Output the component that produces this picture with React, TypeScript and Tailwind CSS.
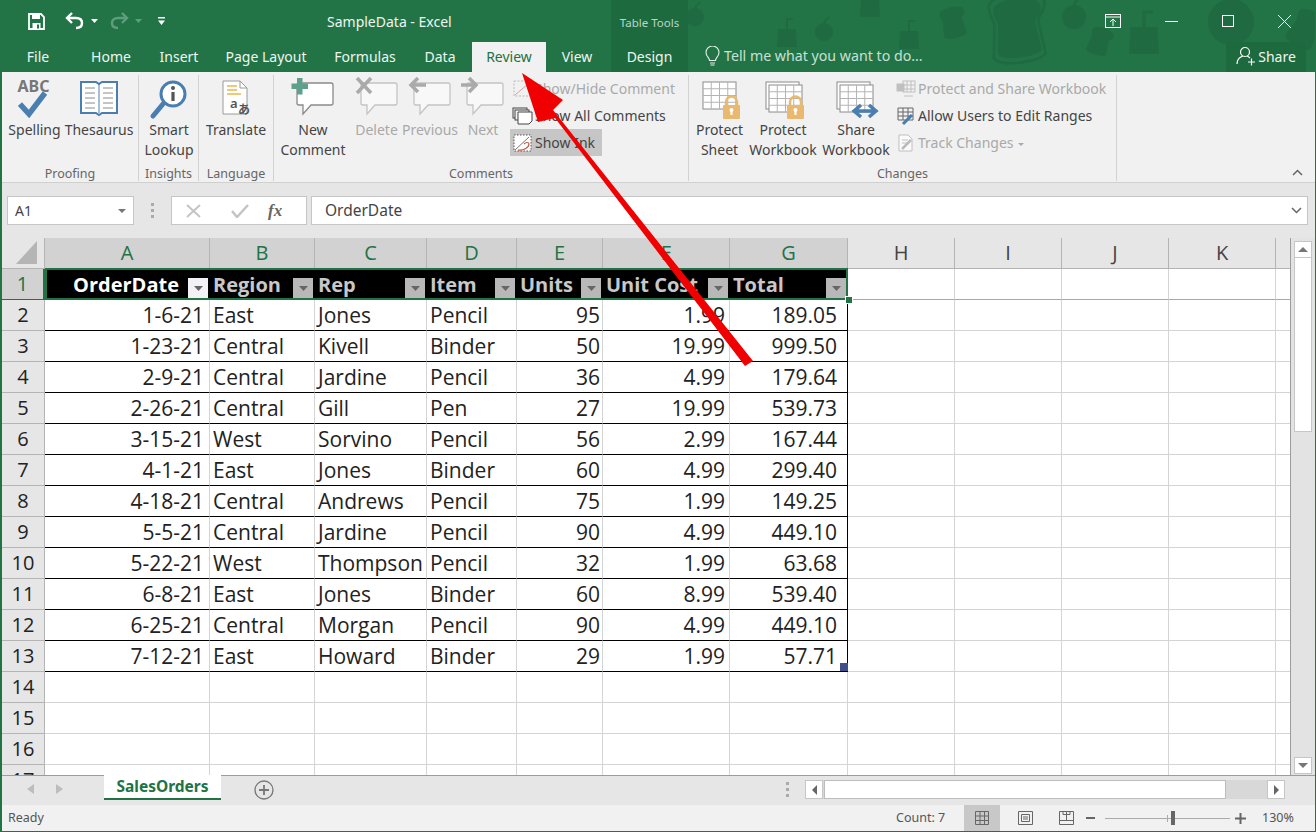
import { Fragment } from "react";

const rows = [
  ["1-6-21", "East", "Jones", "Pencil", "95", "1.99", "189.05"],
  ["1-23-21", "Central", "Kivell", "Binder", "50", "19.99", "999.50"],
  ["2-9-21", "Central", "Jardine", "Pencil", "36", "4.99", "179.64"],
  ["2-26-21", "Central", "Gill", "Pen", "27", "19.99", "539.73"],
  ["3-15-21", "West", "Sorvino", "Pencil", "56", "2.99", "167.44"],
  ["4-1-21", "East", "Jones", "Binder", "60", "4.99", "299.40"],
  ["4-18-21", "Central", "Andrews", "Pencil", "75", "1.99", "149.25"],
  ["5-5-21", "Central", "Jardine", "Pencil", "90", "4.99", "449.10"],
  ["5-22-21", "West", "Thompson", "Pencil", "32", "1.99", "63.68"],
  ["6-8-21", "East", "Jones", "Binder", "60", "8.99", "539.40"],
  ["6-25-21", "Central", "Morgan", "Pencil", "90", "4.99", "449.10"],
  ["7-12-21", "East", "Howard", "Binder", "29", "1.99", "57.71"],
];

const headers = ["OrderDate", "Region", "Rep", "Item", "Units", "Unit Cost", "Total"];
const gridCols = "grid grid-cols-[43px_165px_105px_112px_90px_86px_127px_118px_107px_107px_107px_107px_15px]";

function Bubble({ dim }: { dim?: boolean }) {
  return (
    <path
      d="M9 11H41a2 2 0 0 1 2 2V31a2 2 0 0 1-2 2H21L13 42V33H9a2 2 0 0 1-2-2V13a2 2 0 0 1 2-2Z"
      fill="#fff"
      fillOpacity={dim ? 0.5 : 1}
      stroke={dim ? "#c4c4c4" : "#8a8a8a"}
      strokeWidth="1.3"
    />
  );
}

function CommentIcon({ kind }: { kind: "new" | "delete" | "prev" | "next" }) {
  return (
    <svg width="46" height="44" viewBox="0 0 46 44" className="-mt-[7px]">
      <Bubble dim={kind !== "new"} />
      {kind === "new" && <path d="M7 6h5.500v5.500H18V17h-5.500v5.500H7V17H1.500V11.500H7Z" fill="#5f9f8d" />}
      {kind === "delete" && <path d="M3 6l14 15M17 6L3 21" stroke="#aaa" strokeWidth="3.500" fill="none" />}
      {kind === "prev" && <path d="M19 13H5M11 6l-7 7 7 7" stroke="#aaa" strokeWidth="3.500" fill="none" />}
      {kind === "next" && <path d="M1 13h14M9 6l7 7-7 7" stroke="#aaa" strokeWidth="3.500" fill="none" />}
    </svg>
  );
}

function SheetGrid({ x, y, w, h, double }: { x: number; y: number; w: number; h: number; double?: boolean }) {
  const cols = [1, 2, 3];
  const lines = [1, 2, 3];
  return (
    <g stroke="#8c8c8c" strokeWidth="1" fill="none">
      {double && <rect x={x - 3} y={y - 3} width={w} height={h} fill="#fff" />}
      <rect x={x} y={y} width={w} height={h} fill="#fff" />
      {cols.map((c) => (
        <line key={c} x1={x + (w * c) / 4} y1={y} x2={x + (w * c) / 4} y2={y + h} stroke="#b4b4b4" />
      ))}
      {lines.map((l) => (
        <line key={l} x1={x} y1={y + (h * l) / 4} x2={x + w} y2={y + (h * l) / 4} stroke="#b4b4b4" />
      ))}
    </g>
  );
}

function Padlock({ x, y }: { x: number; y: number }) {
  return (
    <g>
      <path d={`M${x + 3} ${y + 10}V${y + 6}a5.500 5.500 0 0 1 11 0V${y + 10}`} fill="none" stroke="#e8b96f" strokeWidth="2.500" />
      <rect x={x} y={y + 9} width="17" height="14" rx="1" fill="#e8b96f" />
      <rect x={x + 7.500} y={y + 13} width="2" height="6" fill="#fff" />
      <circle cx={x + 8.500} cy={y + 14} r="2" fill="#fff" />
    </g>
  );
}

function BigButton({ w, lines, dim, children }: { w: string; lines: string[]; dim?: boolean; children: React.ReactNode }) {
  return (
    <div className={`${w} flex flex-col items-center shrink-0`}>
      <div className="h-[41px] shrink-0 flex items-start justify-center">{children}</div>
      {lines.map((l) => (
        <div key={l} className={`h-[20px] shrink-0 leading-[20px] whitespace-nowrap ${dim ? "text-[#a9a9a9]" : "text-[#444]"}`}>
          {l}
        </div>
      ))}
    </div>
  );
}

function Group({ label, w, children }: { label: string; w: string; children: React.ReactNode }) {
  return (
    <div className={`${w} h-[106px] mt-[3px] shrink-0 flex flex-col border-r border-[#d2d2d2]`}>
      <div className="flex h-[90px] pt-[4px]">{children}</div>
      <div className="h-[16px] leading-[18px] text-center text-[12.500px] text-[#666]">{label}</div>
    </div>
  );
}

function SmallRow({ icon, label, dim, active, w }: { icon: React.ReactNode; label: React.ReactNode; dim?: boolean; active?: boolean; w?: string }) {
  return (
    <div className={`h-[27px] flex items-center ${w ?? ""} ${active ? "bg-[#c6c6c6]" : ""} ${dim ? "text-[#a9a9a9]" : "text-[#444]"}`}>
      <div className="w-[25px] h-[22px] shrink-0 flex justify-center items-center">{icon}</div>
      <span className="whitespace-nowrap">{label}</span>
    </div>
  );
}

function FilterButton({ active }: { active?: boolean }) {
  return (
    <div className={`w-[20px] h-[20px] shrink-0 flex items-center justify-center mb-[1px] ${active ? "bg-[#f1f1f6]" : "bg-[#b8b8b8]"}`}>
      <svg width="9" height="5" viewBox="0 0 9 5">
        <path d="M0 0h9L4.500 5Z" fill="#666" />
      </svg>
    </div>
  );
}

function Doodles() {
  const bread = "M-14-12c0-8 28-8 28 0 0 5-4 6-4 9l2 16c0 4-24 6-26 0l2-16c0-3-2-4-2-9Z";
  const apple = (x: number, y: number, s: number) => (
    <g transform={`translate(${x} ${y}) scale(${s})`}>
      <circle r="10" />
      <path d="M0-9c1-4 3-6 6-7" stroke="#1f6a41" strokeWidth="2" fill="none" />
    </g>
  );
  const cup = (x: number, y: number, s: number) => (
    <g transform={`translate(${x} ${y}) scale(${s})`}>
      <path d="M-9-6H9L10 12H-10Z" />
      <path d="M0-6V-16H6" stroke="#1f6a41" strokeWidth="2" fill="none" />
    </g>
  );
  return (
    <svg className="absolute left-0 top-0 pointer-events-none" width="1316" height="72" viewBox="0 0 1316 72" fill="#1f6a41">
      {apple(693, 17, 0.9)}
      {apple(822, 32, 0.9)}
      {apple(1072, 17, 1.2)}
      {apple(1229, 22, 2.3)}
      {cup(785, 35, 1)}
      {cup(907, 37, 1)}
      {cup(868, 5, 1)}
      {cup(1142, 36, 1.500)}
      <path transform="translate(952 23) rotate(-12) scale(0.9)" d={bread} />
      <path transform="translate(1017 29) rotate(-6) scale(2)" d={bread} fill="none" stroke="#1f6a41" strokeWidth="1.300" />
      <path transform="translate(1017 29) rotate(-6) scale(1.700)" d={bread} />
      <path transform="translate(1098 42) rotate(18) scale(0.800)" d={bread} />
      <path transform="translate(1304 30) rotate(30) scale(1.100)" d={bread} />
    </svg>
  );
}

function TitleBar() {
  return (
    <div className="h-[42px] flex text-[#f1f7f3] relative">
      <div className="w-[325px] flex items-center">
        <svg className="ml-[26px]" width="17" height="17" viewBox="0 0 17 17" fill="none">
          <path d="M1 1h12l3 3v12H1Z" stroke="#fff" strokeWidth="1.800" />
          <rect x="4" y="1" width="8" height="5" fill="#fff" />
          <rect x="4.500" y="10" width="8" height="6" fill="#fff" />
          <rect x="9" y="11.500" width="2" height="4" fill="#227447" />
        </svg>
        <svg className="ml-[20px]" width="20" height="18" viewBox="0 0 20 18" fill="none">
          <path d="M7 1L2 6l5 5M2 6h9c4 0 6 2 6 5s-2 5-6 5" stroke="#fff" strokeWidth="2.400" />
        </svg>
        <svg className="ml-[6px]" width="7" height="4" viewBox="0 0 7 4"><path d="M0 0h7L3.500 4Z" fill="#fff" /></svg>
        <svg className="ml-[11px]" width="20" height="18" viewBox="0 0 20 18" fill="none">
          <path d="M13 1l5 5-5 5M18 6H9c-4 0-6 2-6 5s2 5 6 5" stroke="#5f9d7c" strokeWidth="2.400" />
        </svg>
        <svg className="ml-[6px]" width="7" height="4" viewBox="0 0 7 4"><path d="M0 0h7L3.500 4Z" fill="#5f9d7c" /></svg>
        <svg className="ml-[16px]" width="7" height="8" viewBox="0 0 7 8"><path d="M0 0h7v1.500H0ZM0 3.500h7L3.500 8Z" fill="#fff" /></svg>
      </div>
      <div className="w-[284px] flex items-center text-[14px] text-[#eef6f1]">SampleData - Excel</div>
      <div className="w-[77px] pt-[3px] bg-[#1e6a3f] flex items-center justify-center text-[11.500px] text-[#b8d6c5]">Table Tools</div>
      <div className="flex-1 flex items-center">
        <svg className="ml-[417px]" width="16" height="14" viewBox="0 0 16 14" fill="none" stroke="#fff">
          <rect x="0.500" y="0.500" width="15" height="13" />
          <path d="M0 3h16" />
          <path d="M8 12V5M5 8l3-3 3 3" />
        </svg>
        <div className="ml-[44px] w-[13px] h-px bg-white" />
        <div className="ml-[44px] w-[12px] h-[12px] border border-white" />
        <svg className="ml-[44px]" width="13" height="13" viewBox="0 0 13 13" stroke="#fff" fill="none">
          <path d="M0 0l13 13M13 0L0 13" />
        </svg>
      </div>
    </div>
  );
}

function TabsRow() {
  const tabs: [string, string][] = [
    ["File", "w-[72px]"],
    ["Home", "w-[74px]"],
    ["Insert", "w-[62px]"],
    ["Page Layout", "w-[112px]"],
    ["Formulas", "w-[86px]"],
    ["Data", "w-[64px]"],
  ];
  return (
    <div className="h-[30px] flex text-[14px] text-[#eef6f1] relative">
      {tabs.map(([t, w]) => (
        <div key={t} className={`${w} pb-[2px] flex items-center justify-center`}>
          {t}
        </div>
      ))}
      <div className="w-[74px] pb-[2px] flex items-center justify-center bg-[#f1f1f1] text-[#217346]">Review</div>
      <div className="w-[62px] pb-[2px] flex items-center justify-center">View</div>
      <div className="w-[3px]" />
      <div className="w-[77px] pb-[2px] flex items-center justify-center bg-[#1e6a3f]">Design</div>
      <div className="flex-1 pb-[2px] flex items-center pl-[16px] text-[#c8e0d2]">
        <svg width="17" height="20" viewBox="0 0 17 20" fill="none" stroke="#e4f0e9" strokeWidth="1.100">
          <path d="M5.500 14.500c0-3-3.500-4-3.500-8a6.500 6.500 0 0 1 13 0c0 4-3.500 5-3.500 8Z" />
          <path d="M6 17h5M6.500 19h4" />
        </svg>
        <span className="ml-[3px] whitespace-nowrap text-[14.200px]">Tell me what you want to do...</span>
      </div>
      <div className="w-[80px] mr-[9px] pb-[2px] bg-[#1e6a3f] flex items-center justify-center gap-[2px] text-[#f1f7f3]">
        <svg width="20" height="20" viewBox="0 0 20 20" fill="none" stroke="#fff" strokeWidth="1.200">
          <circle cx="9" cy="6" r="4.500" />
          <path d="M1 18c0-5 3-7 6-8M11 10c1 .3 2 1 3 2M12 16h7M15.500 12.500v7" />
        </svg>
        Share
      </div>
    </div>
  );
}

function Ribbon() {
  return (
    <div className="h-[111px] bg-[#f1f1f1] border-b border-[#d0d0d0] flex text-[14px] relative">
      <Group label="Proofing" w="w-[137px]">
        <BigButton w="w-[63px] ml-px" lines={["Spelling"]}>
          <div className="relative w-[40px] h-[41px]">
            <span className="absolute left-[3px] -top-[5px] text-[16px] font-bold text-[#777]">ABC</span>
            <svg className="absolute left-[3px] top-[12px]" width="30" height="28" viewBox="0 0 30 28" fill="none">
              <path d="M2 13l9 10L27 2" stroke="#4a7eb0" strokeWidth="5.500" />
            </svg>
          </div>
        </BigButton>
        <BigButton w="w-[66px]" lines={["Thesaurus"]}>
          <svg width="40" height="38" viewBox="0 0 40 38" fill="none">
            <path d="M2 3h15l3 2 3-2h15v31H23l-3 2-3-2H2Z" stroke="#4a7eb0" strokeWidth="2" fill="#fff" />
            <path d="M20 5v29" stroke="#4a7eb0" />
            <path d="M6 9h10M24 9h10M6 14h10M24 14h10M6 19h10M24 19h10M6 24h10M24 24h10M6 29h10M24 29h10" stroke="#8a8a8a" />
          </svg>
        </BigButton>
      </Group>
      <Group label="Insights" w="w-[60px]">
        <BigButton w="w-[60px]" lines={["Smart", "Lookup"]}>
          <svg width="40" height="42" viewBox="0 0 40 42" fill="none">
            <circle cx="24" cy="15" r="12" stroke="#4a7eb0" strokeWidth="3" fill="#fff" />
            <path d="M14 25L4 37" stroke="#4a7eb0" strokeWidth="5" strokeLinecap="round" />
            <circle cx="24" cy="9" r="2" fill="#555" />
            <path d="M24 13v9" stroke="#555" strokeWidth="3.200" />
          </svg>
        </BigButton>
      </Group>
      <Group label="Language" w="w-[75px]">
        <BigButton w="w-[74px]" lines={["Translate"]}>
          <div className="relative w-[38px] h-[44px] -mt-[5px]">
            <svg width="38" height="44" viewBox="0 0 38 44" fill="none">
              <path d="M6 7h17l7 7v26H6Z" fill="#fff" stroke="#9a9a9a" />
              <path d="M23 7v7h7" stroke="#9a9a9a" />
              <path d="M10 12h10M10 16h10M10 20h14" stroke="#e8b84f" strokeWidth="1.300" />
            </svg>
            <span className="absolute left-[13px] top-[21px] text-[13px] leading-[16px] font-semibold text-[#555]">a</span>
            <span className="absolute left-[21px] top-[28px] text-[12px] leading-[14px] font-semibold text-[#555] font-['Noto_Sans_CJK_JP',sans-serif]">あ</span>
          </div>
        </BigButton>
      </Group>
      <Group label="Comments" w="w-[415px]">
        <BigButton w="w-[74px] ml-[2px]" lines={["New", "Comment"]}><CommentIcon kind="new" /></BigButton>
        <BigButton w="w-[53px]" dim lines={["Delete"]}><CommentIcon kind="delete" /></BigButton>
        <BigButton w="w-[54px]" dim lines={["Previous"]}><CommentIcon kind="prev" /></BigButton>
        <BigButton w="w-[52px]" dim lines={["Next"]}><CommentIcon kind="next" /></BigButton>
        <div className="flex flex-col ml-[1px] -mt-[4px]">
          <SmallRow
            dim
            label="Show/Hide Comment"
            icon={
              <svg width="20" height="20" viewBox="0 0 20 20" fill="none">
                <rect x="1" y="2" width="17" height="15" stroke="#bbb" strokeDasharray="2 1.500" />
                <path d="M2 16L15 5" stroke="#c8a8a0" />
              </svg>
            }
          />
          <SmallRow
            label="Show All Comments"
            icon={
              <svg width="22" height="20" viewBox="0 0 22 20" fill="none" stroke="#444">
                <rect x="1" y="2" width="14" height="10" />
                <rect x="3" y="4" width="14" height="10" fill="#f1f1f1" />
                <path d="M6 6h14v9l-3 3H6Z" fill="#fff" />
              </svg>
            }
          />
          <SmallRow
            active
            w="w-[92px]"
            label="Show Ink"
            icon={
              <svg width="20" height="20" viewBox="0 0 20 20" fill="none">
                <rect x="1" y="2" width="17" height="16" fill="#fff" stroke="#555" strokeDasharray="1.500 1.500" />
                <path d="M2 17L16 4" stroke="#777" />
                <path d="M5 17c6 1 11-3 11-6 0-2-3-2-5 0" stroke="#c8553d" strokeWidth="1.200" />
              </svg>
            }
          />
        </div>
      </Group>
      <Group label="Changes" w="w-[428px]">
        <BigButton w="w-[59px] ml-[1px]" lines={["Protect", "Sheet"]}>
          <svg width="50" height="46" viewBox="0 0 50 46" fill="none">
            <SheetGrid x={8} y={3} w={33} h={27} />
            <Padlock x={28} y={17} />
          </svg>
        </BigButton>
        <BigButton w="w-[68px]" lines={["Protect", "Workbook"]}>
          <svg width="50" height="46" viewBox="0 0 50 46" fill="none">
            <SheetGrid x={11} y={6} w={33} h={27} double />
            <Padlock x={29} y={17} />
          </svg>
        </BigButton>
        <BigButton w="w-[74px] ml-[2px]" lines={["Share", "Workbook"]}>
          <svg width="50" height="46" viewBox="0 0 50 46" fill="none">
            <SheetGrid x={9} y={6} w={33} h={27} double />
            <path d="M24 32h20M30 26l-7 6 7 6M38 26l7 6-7 6" stroke="#4a7eb0" strokeWidth="3.500" />
          </svg>
        </BigButton>
        <div className="flex flex-col -mt-[4px]">
          <SmallRow
            dim
            label="Protect and Share Workbook"
            icon={
              <svg width="22" height="20" viewBox="0 0 22 20" fill="none" stroke="#c0c0c0">
                <rect x="8" y="2" width="12" height="11" />
                <path d="M8 6h12M8 10h12M12 2v11M16 2v11" />
                <rect x="2" y="5" width="7" height="7" fill="#c0c0c0" />
                <path d="M9 17h9" />
              </svg>
            }
          />
          <SmallRow
            label="Allow Users to Edit Ranges"
            icon={
              <svg width="22" height="20" viewBox="0 0 22 20" fill="none">
                <path d="M3 2h15v12H3ZM3 6h15M3 10h15M8 2v12M13 2v12" stroke="#666" />
                <path d="M8 18l9-9" stroke="#4a7eb0" strokeWidth="3" />
              </svg>
            }
          />
          <SmallRow
            dim
            label={
              <>
                Track Changes
                <span className="inline-block ml-[4px] mb-[2px] border-x-[3px] border-t-[3px] border-x-transparent border-t-[#aaa]" />
              </>
            }
            icon={
              <svg width="20" height="20" viewBox="0 0 20 20" fill="none">
                <path d="M3 2h9l4 4v12H3Z" stroke="#c0c0c0" fill="#fafafa" />
                <path d="M6 7h6M6 10h6" stroke="#c0c0c0" />
                <path d="M6 16l9-9" stroke="#bbb" strokeWidth="2.500" />
              </svg>
            }
          />
        </div>
      </Group>
      <svg className="absolute right-[12px] bottom-[6px]" width="11" height="7" viewBox="0 0 11 7" fill="none" stroke="#666" strokeWidth="1.500">
        <path d="M1 6l4.500-4.500L10 6" />
      </svg>
    </div>
  );
}

function FormulaBar() {
  return (
    <div className="h-[55px] bg-[#e6e6e6] flex items-start pt-[13px] pr-[7px] text-[#444]">
      <div className="ml-[5px] w-[127px] h-[29px] bg-white border border-[#c6c6c6] flex items-center justify-between px-[7px] text-[14px]">
        A1
        <svg width="8" height="4" viewBox="0 0 8 4"><path d="M0 0h8L4 4Z" fill="#777" /></svg>
      </div>
      <div className="w-[37px] h-[29px] flex flex-col items-center justify-center gap-[3px]">
        <div className="w-[3px] h-[3px] bg-[#aaa]" />
        <div className="w-[3px] h-[3px] bg-[#aaa]" />
        <div className="w-[3px] h-[3px] bg-[#aaa]" />
      </div>
      <div className="w-[136px] h-[29px] bg-white border border-[#c6c6c6] flex items-center text-[#bbb]">
        <svg className="ml-[14px]" width="15" height="14" viewBox="0 0 15 14" fill="none" stroke="#c4c4c4" strokeWidth="2"><path d="M1 1l13 12M14 1L1 13" /></svg>
        <svg className="ml-[30px]" width="18" height="14" viewBox="0 0 18 14" fill="none" stroke="#c4c4c4" strokeWidth="2.500"><path d="M1 7l5 6L17 1" /></svg>
        <span className="ml-[19px] text-[17px] font-bold italic text-[#666] font-['Liberation_Serif',serif]">fx</span>
      </div>
      <div className="ml-[4px] flex-1 h-[29px] bg-white border border-[#c6c6c6] flex items-center justify-between pl-[13px] pr-[5px] text-[15.500px]">
        OrderDate
        <svg width="11" height="7" viewBox="0 0 11 7" fill="none" stroke="#666" strokeWidth="1.500"><path d="M1 1l4.500 4.500L10 1" /></svg>
      </div>
    </div>
  );
}

function Sheet() {
  const letters = ["A", "B", "C", "D", "E", "F", "G", "H", "I", "J", "K", ""];
  const rightAligned = [0, 4, 5, 6];
  const pads = ["pr-[5px]", "", "", "", "pr-[2px]", "pr-[4px]", "pr-[10px]"];
  return (
    <div className="h-[537px] flex">
      <div className="w-[1289px] bg-white border-r border-[#9c9c9c] h-full overflow-hidden relative font-['Open_Sans',sans-serif] text-[21px] text-[#222]">
        <div className={gridCols}>
          {/* column headers */}
          <div className="h-[31px] bg-[#e6e6e6] border-r border-b border-[#b4b4b4] flex items-end justify-end">
            <svg width="26" height="26" viewBox="0 0 26 26" className="mb-[3px] mr-[4px]"><path d="M23 2V25H2Z" fill="#b5b5b5" /></svg>
          </div>
          {letters.map((l, i) => (
            <div
              key={i}
              className={`h-[31px] text-[20px] border-r border-b border-[#b4b4b4] flex items-center justify-center ${i < 7 ? "bg-[#d2d2d2] text-[#217346]" : "bg-[#e6e6e6] text-[#444]"}`}
            >
              {l}
            </div>
          ))}

          {/* table header row */}
          <div className="h-[31px] bg-[#d2d2d2] text-[20px] text-[#217346] border-r-2 border-b border-[#217346] flex items-center justify-center">1</div>
          {headers.map((h, i) => (
            <div
              key={h}
              className={`h-[31px] bg-black font-bold text-[20px] pl-[3px] pr-[2px] flex items-end pb-[1px] ${i === 0 ? "justify-end gap-[9px] text-white" : "justify-between text-[#c8c8c8]"}`}
            >
              <span className="leading-[28px]">{h}</span>
              <FilterButton active={i === 0} />
            </div>
          ))}
          {[0, 1, 2, 3, 4].map((i) => (
            <div key={i} className="h-[31px] border-r border-b border-r-[#d4d4d4] border-b-[#a8a8a8]" />
          ))}

          {/* data rows */}
          {rows.map((r, ri) => (
            <Fragment key={ri}>
              <div className="h-[31px] bg-[#e6e6e6] text-[20px] border-r border-b border-[#b4b4b4] flex items-center justify-center">{ri + 2}</div>
              {r.map((c, ci) => (
                <div
                  key={ci}
                  className={`h-[31px] pt-[2px] border-b border-b-black flex items-center border-r ${ci === 6 ? "border-r-black" : "border-r-[#d4d4d4]"} ${rightAligned.includes(ci) ? `justify-end ${pads[ci]}` : "pl-[3px]"}`}
                >
                  {c}
                </div>
              ))}
              {[0, 1, 2, 3, 4].map((i) => (
                <div key={i} className="h-[31px] border-r border-b border-[#d4d4d4]" />
              ))}
            </Fragment>
          ))}

          {/* empty rows */}
          {[14, 15, 16, 17].map((n) => (
            <Fragment key={n}>
              <div className="h-[31px] bg-[#e6e6e6] text-[20px] border-r border-b border-[#b4b4b4] flex items-center justify-center">{n}</div>
              {letters.map((_, i) => (
                <div key={i} className="h-[31px] border-r border-b border-[#d4d4d4]" />
              ))}
            </Fragment>
          ))}
        </div>
        {/* selection outline and handles */}
        <div className="absolute left-[43px] top-[30px] w-[803px] h-[32px] border-2 border-[#217346] pointer-events-none" />
        <div className="absolute left-[843px] top-[58px] w-[6px] h-[6px] bg-[#217346] border border-white box-content" />
        <div className="absolute left-[838px] top-[425px] w-[8px] h-[8px] bg-[#3f4f8c]" />
      </div>
      <div className="flex-1 bg-[#e3e3e3] flex flex-col items-center pt-[3px] pb-[1px]">
        <div className="w-[18px] h-[17px] bg-white border border-[#c6c6c6] flex items-center justify-center">
          <svg width="10" height="5" viewBox="0 0 10 5"><path d="M0 5h10L5 0Z" fill="#777" /></svg>
        </div>
        <div className="w-[18px] h-[174px] bg-white border-x border-b border-[#c6c6c6]" />
        <div className="flex-1" />
        <div className="w-[18px] h-[17px] bg-white border border-[#c6c6c6] flex items-center justify-center">
          <svg width="10" height="5" viewBox="0 0 10 5"><path d="M0 0h10L5 5Z" fill="#777" /></svg>
        </div>
      </div>
    </div>
  );
}

function SheetTabs() {
  return (
    <div className="h-[30px] bg-[#e6e6e6] border-t border-[#9c9c9c] flex items-start">
      <div className="w-[102px] h-[26px] flex items-center">
        <svg className="ml-[25px]" width="7" height="10" viewBox="0 0 7 10"><path d="M7 0v10L0 5Z" fill="#bdbdbd" /></svg>
        <svg className="ml-[22px]" width="7" height="10" viewBox="0 0 7 10"><path d="M0 0v10l7-5Z" fill="#bdbdbd" /></svg>
      </div>
      <div className="w-[117px] h-[25px] -mt-px bg-white border-b-2 border-[#217346] flex items-center justify-center text-[15.500px] font-bold text-[#217346]">
        SalesOrders
      </div>
      <svg className="ml-[33px] mt-[4px]" width="20" height="20" viewBox="0 0 20 20" fill="none" stroke="#777">
        <circle cx="10" cy="10" r="9" strokeWidth="1.300" />
        <path d="M10 5v10M5 10h10" strokeWidth="1.800" />
      </svg>
      <div className="w-[531px] h-[26px] flex items-center justify-end pr-[16px]">
        <div className="flex flex-col gap-[3px]">
          <div className="w-[3px] h-[3px] bg-[#aaa]" />
          <div className="w-[3px] h-[3px] bg-[#aaa]" />
          <div className="w-[3px] h-[3px] bg-[#aaa]" />
        </div>
      </div>
      <div className="w-[480px] h-[19px] mt-[4px] bg-[#d8d8d8] flex">
        <div className="w-[18px] h-full bg-white border border-[#c6c6c6] flex items-center justify-center">
          <svg width="5" height="10" viewBox="0 0 5 10"><path d="M5 0v10L0 5Z" fill="#666" /></svg>
        </div>
        <div className="w-[402px] ml-px h-full bg-white border border-[#bdbdbd]" />
        <div className="flex-1" />
        <div className="w-[18px] h-full bg-white border border-[#c6c6c6] flex items-center justify-center">
          <svg width="5" height="10" viewBox="0 0 5 10"><path d="M0 0v10l5-5Z" fill="#666" /></svg>
        </div>
      </div>
    </div>
  );
}

function StatusBar() {
  return (
    <div className="h-[26px] bg-[#f1f1f1] flex items-center text-[12.500px] text-[#555]">
      <div className="w-[894px] pl-[6px]">Ready</div>
      <div className="w-[68px]">Count: 7</div>
      <div className="w-[36px] h-full bg-[#c8c8c8] flex items-center justify-center">
        <svg width="14" height="14" viewBox="0 0 14 14" fill="none" stroke="#666"><path d="M.5.5h13v13H.5ZM.5 5h13M.5 9.500h13M5 .5v13M9.500.5v13" /></svg>
      </div>
      <div className="w-[50px] flex justify-center">
        <svg width="15" height="14" viewBox="0 0 15 14" fill="none" stroke="#666"><path d="M.5.5h14v13H.5ZM3.500 3.500h8v7h-8ZM5 6h5M5 8h5" /></svg>
      </div>
      <div className="w-[32px] flex justify-center">
        <svg width="15" height="14" viewBox="0 0 15 14" fill="none" stroke="#666"><path d="M.5.5h14v13H.5ZM.5 9.500h14M7.500.5v9M4 .5v3h7v-3" /></svg>
      </div>
      <div className="w-[23px] flex justify-center pr-[6px]">
        <div className="w-[9px] h-[2px] bg-[#666]" />
      </div>
      <div className="w-[125px] h-px bg-[#aaa] relative">
        <div className="absolute left-[62px] top-[-3px] w-px h-[7px] bg-[#aaa]" />
        <div className="absolute left-[66px] top-[-7px] w-[4px] h-[14px] bg-[#666]" />
      </div>
      <div className="w-[20px] flex justify-center">
        <svg width="11" height="11" viewBox="0 0 11 11" stroke="#666" strokeWidth="2"><path d="M0 5.500h11M5.500 0v11" /></svg>
      </div>
      <div className="ml-[12px]">130%</div>
    </div>
  );
}

export default function App() {
  return (
    <div className="w-[1316px] h-[832px] relative overflow-hidden bg-[#227447] border-l-2 border-r border-b border-[#227447] font-['Noto_Sans',sans-serif]">
      <Doodles />
      <TitleBar />
      <TabsRow />
      <Ribbon />
      <FormulaBar />
      <Sheet />
      <SheetTabs />
      <StatusBar />
      {/* red annotation arrow */}
      <svg className="absolute -left-[2px] top-0 pointer-events-none" width="1316" height="832" viewBox="0 0 1316 832">
        <path d="M522 73L563 100L553 110L753 361L745 366L555 118L538 122Z" fill="#f00000" />
      </svg>
    </div>
  );
}
